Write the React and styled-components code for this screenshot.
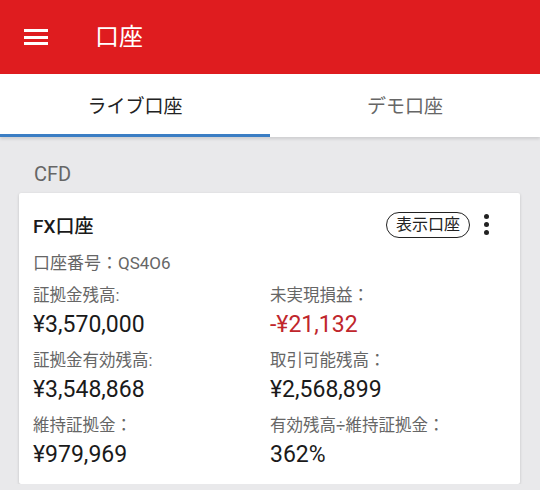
import React from "react";
import styled, {createGlobalStyle} from "styled-components";

const GlobalStyle = createGlobalStyle`
    body {
        margin: 0;
        background: #e9e9eb;
        font-family: Roboto, "Noto Sans CJK JP", sans-serif;
    }
`;

const AppBar = styled.div`
    height: 74px;
    background: #df1c1f;
    display: flex;
    align-items: center;
    padding-left: 24px;
    color: #fff;
`;

const Burger = styled.div`
    width: 24px;
    height: 16px;
    display: flex;
    flex-direction: column;
    justify-content: space-between;
    margin-right: 47px;
    span {
        display: block;
        height: 3px;
        background: #fff;
    }
`;

const Title = styled.div`
    font-size: 24px;
    line-height: 1;
`;

const Tabs = styled.div`
    display: flex;
    background: #fff;
    box-shadow: 0 2px 3px rgba(0, 0, 0, 0.12);
`;

const Tab = styled.div`
    flex: 1;
    height: 60px;
    display: flex;
    align-items: center;
    justify-content: center;
    font-size: 19px;
    color: ${props => (props.$active ? "#222" : "#666")};
    border-bottom: 3px solid ${props => (props.$active ? "#3b7ec4" : "transparent")};
`;

const Section = styled.div`
    padding: 25px 20px 0 19px;
`;

const SectionTitle = styled.div`
    font-size: 20px;
    color: #666;
    padding-left: 15px;
    margin-bottom: 7px;
`;

const Card = styled.div`
    background: #fff;
    border-radius: 2px;
    box-shadow: 0 1px 3px rgba(0, 0, 0, 0.18);
    padding: 18px 14px 16px;
`;

const CardHead = styled.div`
    display: flex;
    align-items: center;
`;

const CardName = styled.div`
    flex: 1;
    font-size: 19px;
    font-weight: 500;
    color: #1a1a1a;
`;

const Pill = styled.div`
    border: 1.5px solid #222;
    border-radius: 14px;
    font-size: 16px;
    color: #222;
    padding: 2px 9px;
    line-height: 20px;
`;

const More = styled.div`
    width: 12px;
    margin: 0 14px 0 10px;
    display: flex;
    flex-direction: column;
    align-items: center;
    gap: 3px;
    span {
        width: 5px;
        height: 5px;
        border-radius: 50%;
        background: #222;
    }
`;

const AccountNo = styled.div`
    font-size: 17px;
    color: #666;
    margin-top: 11px;
`;

const Grid = styled.div`
    display: grid;
    grid-template-columns: 237px 1fr;
    row-gap: 13px;
    margin-top: 12px;
`;

const Label = styled.div`
    font-size: 16.5px;
    color: #666;
    line-height: 20px;
`;

const Value = styled.div`
    font-size: 23px;
    color: ${props => (props.$negative ? "#c0262c" : "#1a1a1a")};
    line-height: 26px;
    margin-top: 6px;
`;

const items = [
    {label: "証拠金残高:", value: "¥3,570,000"},
    {label: "未実現損益：", value: "-¥21,132", negative: true},
    {label: "証拠金有効残高:", value: "¥3,548,868"},
    {label: "取引可能残高：", value: "¥2,568,899"},
    {label: "維持証拠金：", value: "¥979,969"},
    {label: "有効残高÷維持証拠金：", value: "362%"},
];

const App = () => {
    return (
        <>
            <GlobalStyle/>
            <AppBar>
                <Burger><span/><span/><span/></Burger>
                <Title>口座</Title>
            </AppBar>
            <Tabs>
                <Tab $active>ライブ口座</Tab>
                <Tab>デモ口座</Tab>
            </Tabs>
            <Section>
                <SectionTitle>CFD</SectionTitle>
                <Card>
                    <CardHead>
                        <CardName>FX口座</CardName>
                        <Pill>表示口座</Pill>
                        <More><span/><span/><span/></More>
                    </CardHead>
                    <AccountNo>口座番号：QS4O6</AccountNo>
                    <Grid>
                        {items.map(item => (
                            <div key={item.label}>
                                <Label>{item.label}</Label>
                                <Value $negative={item.negative}>{item.value}</Value>
                            </div>
                        ))}
                    </Grid>
                </Card>
            </Section>
        </>
    );
};

export default App;
